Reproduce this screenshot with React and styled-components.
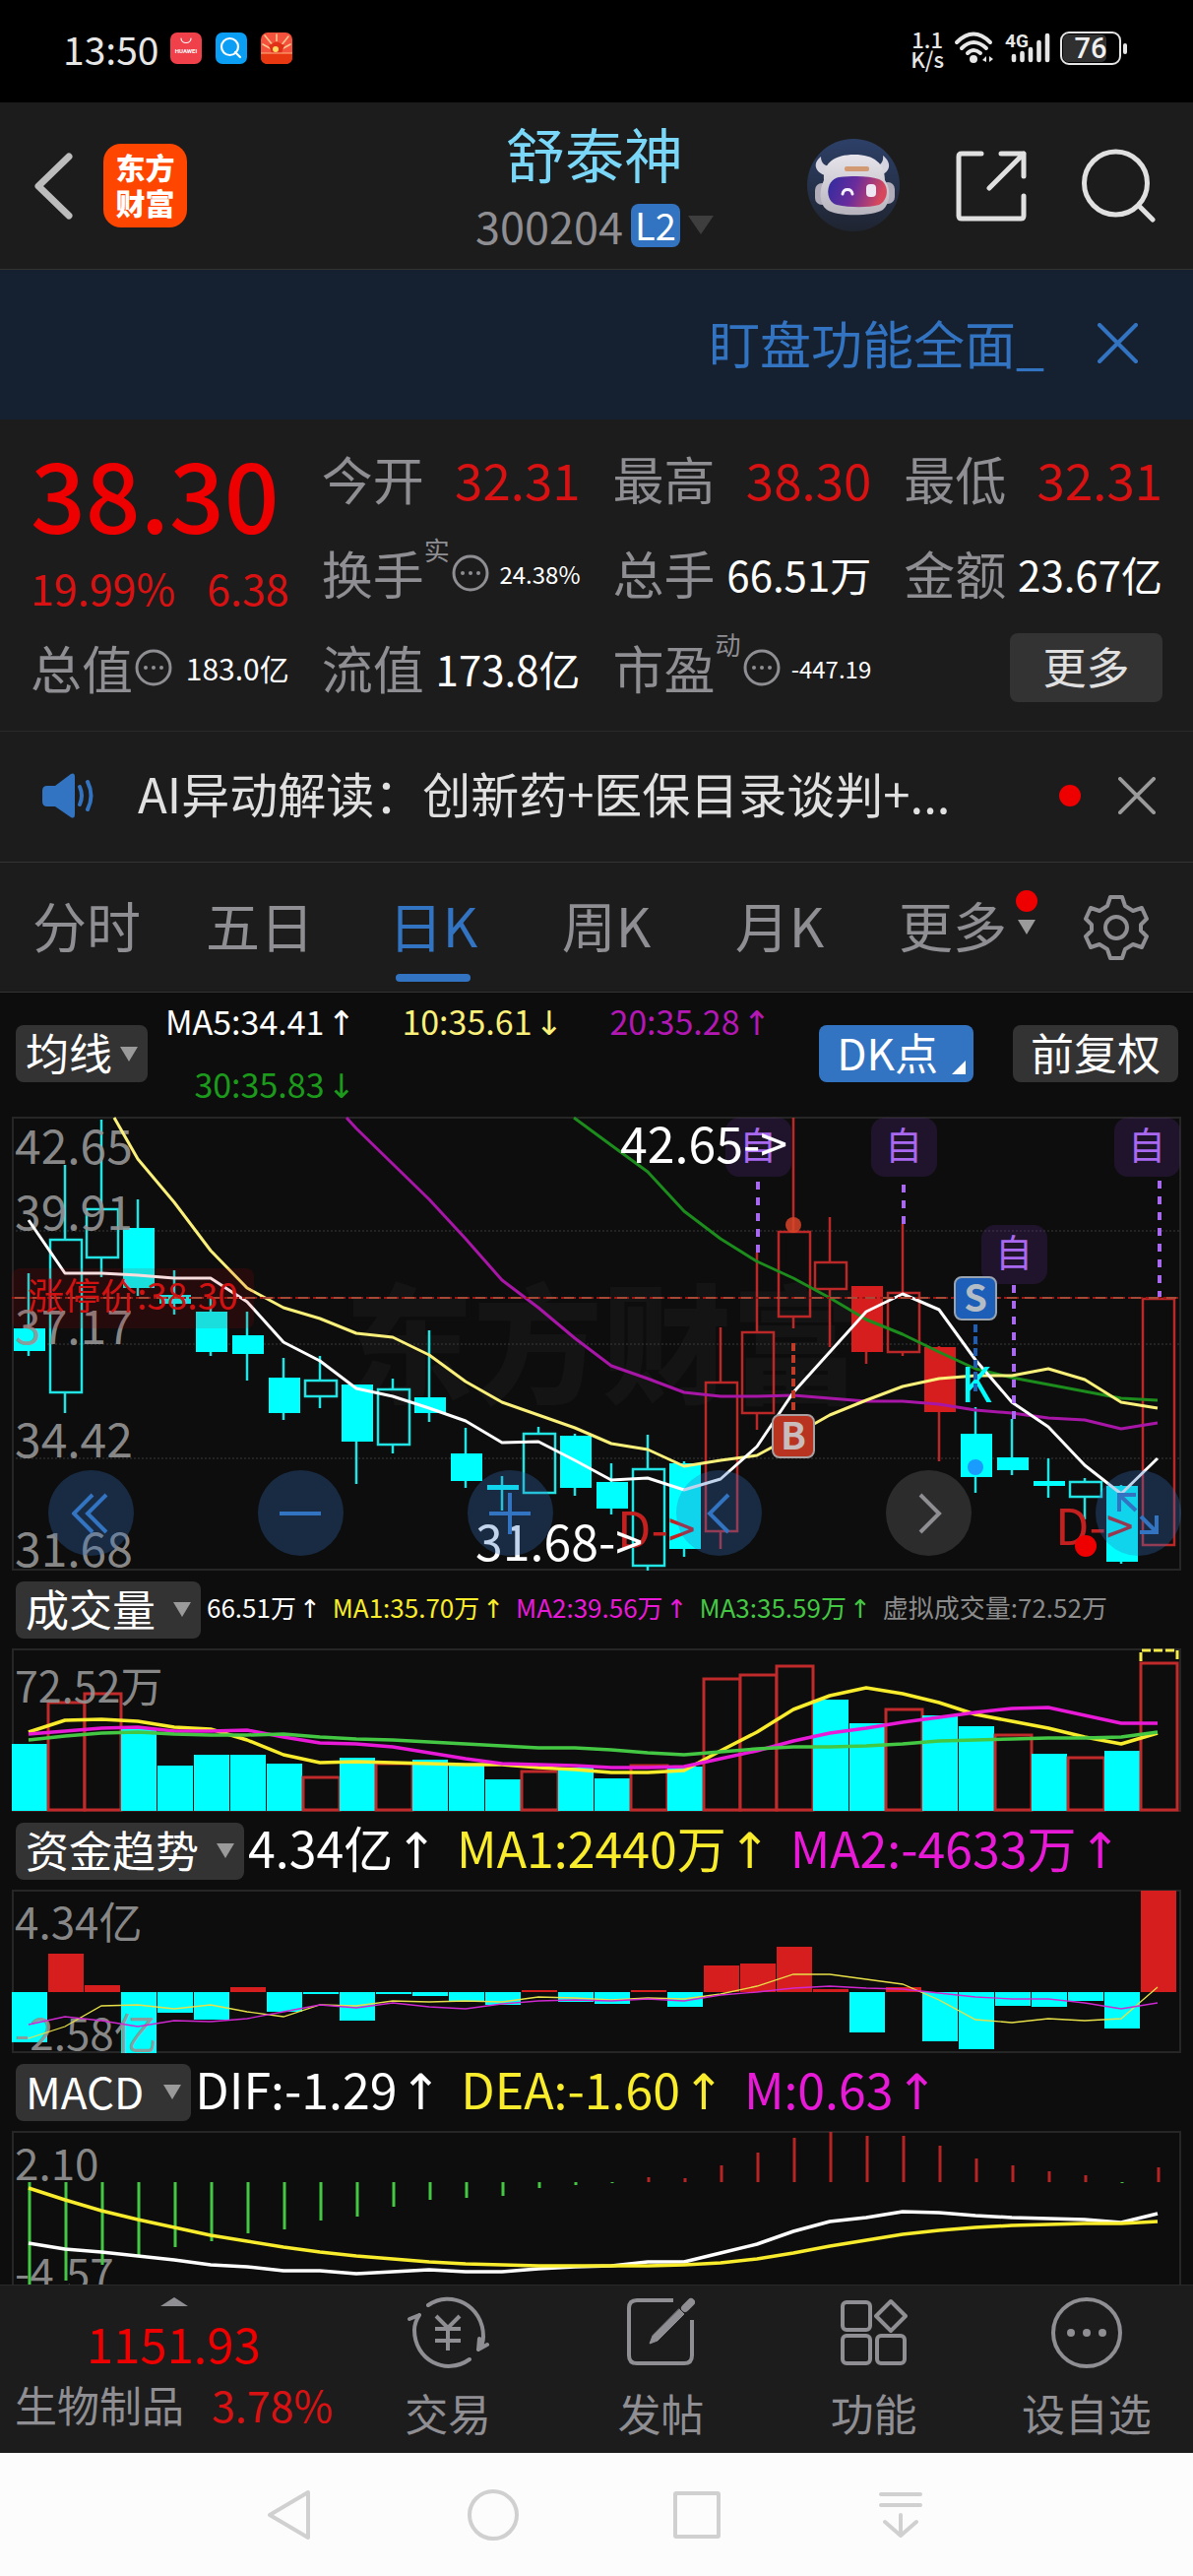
import React from "react";
import styled, { createGlobalStyle, css } from "styled-components";

const c = {
  panel: "#1c1c1c",
  ink: "#0d0d0d",
  chip: "#333333",
  line: "#333333",
  blue: "#3274c2",
  gray: "#8e8e93",
  red: "#ee0000",
  softRed: "#d81212",
  cyan: "#00ffff",
  yellow: "#f8ec2c",
  magenta: "#e81ad8",
  green: "#44c844",
};

const Global = createGlobalStyle`
  * { box-sizing: border-box; }
  body { margin: 0; background: ${c.ink}; }
  body, button { font-family: "Noto Sans CJK SC", Roboto, sans-serif; }
  button { border: 0; padding: 0; background: none; color: inherit; font-size: inherit; cursor: pointer; }
  svg { display: block; flex: none; }
`;

const Page = styled.div`
  display: flex;
  flex-direction: column;
  color: #fff;
  overflow: hidden;
`;

/* ---------- status bar ---------- */
const StatusBar = styled.div`
  height: 104px;
  padding: 0 66px 6px 64px;
  display: flex;
  justify-content: space-between;
  align-items: center;
  background: #000;
  color: #e6e6e6;
`;
const StatusGroup = styled.div`
  display: flex;
  align-items: center;
  gap: ${(p) => p.$gap}px;
`;
const Clock = styled.span`
  font-size: 39px;
  line-height: 40px;
`;
const Speed = styled.span`
  font-size: 22px;
  line-height: 20px;
  text-align: center;
  font-weight: 500;
`;

/* ---------- header ---------- */
const Header = styled.header`
  height: 170px;
  padding: 0 38px 0 34px;
  display: grid;
  grid-template-columns: 1fr auto 1fr;
  align-items: center;
  background: ${c.panel};
  border-bottom: 1px solid ${c.line};
`;
const HeaderSide = styled.div`
  display: flex;
  align-items: center;
  gap: ${(p) => p.$gap}px;
  justify-content: ${(p) => (p.$end ? "flex-end" : "flex-start")};
`;
const Logo = styled.a`
  width: 85px;
  height: 85px;
  padding-bottom: 4px;
  border-radius: 18px;
  background: #ff4600;
  color: #fff;
  font-size: 30px;
  line-height: 36px;
  font-weight: 900;
  text-align: center;
  text-decoration: none;
  display: grid;
  place-content: center;
`;
const Title = styled.h1`
  margin: 0;
  font-size: 60px;
  line-height: 80px;
  font-weight: 400;
  color: #7bd7f7;
  text-align: center;
`;
const Code = styled.div`
  display: flex;
  align-items: center;
  justify-content: center;
  gap: 8px;
  font-size: 45px;
  line-height: 68px;
  color: ${c.gray};
`;
const Level = styled.span`
  width: 50px;
  height: 44px;
  border-radius: 8px;
  background: ${c.blue};
  color: #fff;
  font-size: 38px;
  line-height: 42px;
  text-align: center;
`;
const Caret = styled.i`
  flex: none;
  border: ${(p) => p.$size || 9}px solid transparent;
  border-top: ${(p) => (p.$size || 9) + 6}px solid ${(p) => p.$color || "#9a9a9a"};
  border-bottom: 0;
`;

/* ---------- banner ---------- */
const Banner = styled.div`
  height: 152px;
  padding: 0 56px 4px;
  display: flex;
  align-items: center;
  justify-content: flex-end;
  gap: 54px;
  background: #152130;
  color: ${c.blue};
  font-size: 52px;
  line-height: 76px;
`;

/* ---------- quote ---------- */
const Quote = styled.section`
  padding: 12px 31px 16px;
  display: grid;
  grid-template-columns: repeat(4, 1fr);
  grid-auto-rows: 96px;
  column-gap: 33px;
  background: ${c.panel};
  border-bottom: 1px solid #2a2a2a;
`;
const PriceBlock = styled.div`
  grid-row: span 2;
  display: flex;
  flex-direction: column;
  color: ${c.red};
`;
const Price = styled.strong`
  font-size: 98px;
  line-height: 122px;
  font-weight: 500;
`;
const Change = styled.div`
  display: flex;
  justify-content: space-between;
  font-size: 43px;
  line-height: 72px;
  color: ${c.softRed};
`;
const Stat = styled.div`
  display: flex;
  align-items: center;
  white-space: nowrap;
  svg { margin: 0 2px; }
`;
const StatLabel = styled.span`
  font-size: 52px;
  line-height: 76px;
  color: ${c.gray};
`;
const StatNote = styled.span`
  align-self: flex-start;
  font-size: 26px;
  line-height: 48px;
  color: ${c.gray};
`;
const StatValue = styled.span`
  margin-left: auto;
  font-size: ${(p) => p.$size}px;
  color: ${(p) => (p.$up ? c.softRed : "#fff")};
`;
const MoreButton = styled.button`
  align-self: center;
  justify-self: end;
  width: 155px;
  height: 70px;
  padding-bottom: 4px;
  border-radius: 8px;
  background: ${c.chip};
  color: #e0e0e0;
  font-size: 44px;
  line-height: 64px;
`;

/* ---------- notice ---------- */
const Notice = styled.section`
  height: 133px;
  padding: 0 38px 2px 42px;
  display: flex;
  align-items: center;
  background: ${c.panel};
  border-bottom: 1px solid ${c.line};
  font-size: 49px;
  line-height: 70px;
  color: #e0e0e0;
`;
const NoticeLink = styled.a`
  flex: 1;
  min-width: 0;
  margin-left: 42px;
  padding-bottom: 6px;
  white-space: nowrap;
  overflow: hidden;
  color: inherit;
  text-decoration: none;
`;
const Dot = styled.i`
  width: 22px;
  height: 22px;
  border-radius: 50%;
  background: ${c.red};
  margin-right: 38px;
`;

/* ---------- tabs ---------- */
const Tabs = styled.nav`
  height: 132px;
  display: flex;
  background: ${c.panel};
  border-bottom: 1px solid ${c.line};
`;
const Tab = styled.button`
  flex: 1;
  position: relative;
  display: flex;
  align-items: center;
  justify-content: center;
  padding-bottom: 8px;
  font-size: 55px;
  line-height: 78px;
  white-space: nowrap;
  color: ${c.gray};
  ${(p) =>
    p.$active &&
    css`
      color: ${c.blue};
      &::after {
        content: "";
        position: absolute;
        left: calc(50% - 38px);
        bottom: 10px;
        width: 76px;
        height: 8px;
        border-radius: 4px;
        background: ${c.blue};
      }
    `}
`;
const TabMark = styled.span`
  position: absolute;
  right: 2px;
  top: 28px;
  display: flex;
  flex-direction: column;
  align-items: center;
  gap: 8px;
  i { margin: 0; }
`;
const GearButton = styled.button`
  flex: 0 0 156px;
  display: grid;
  place-items: center;
`;

/* ---------- indicators ---------- */
const MaRow = styled.div`
  height: 126px;
  padding: 0 15px 2px 16px;
  display: flex;
  align-items: center;
`;
const MaGrid = styled.div`
  flex: 0 0 633px;
  display: grid;
  grid-template-columns: repeat(3, 1fr);
  line-height: 61px;
  font-size: 34px;
  text-align: right;
`;
const Tint = styled.span`
  color: ${(p) => p.$color};
  white-space: nowrap;
`;
const ArrowGlyph = styled.span`
  font-family: "DejaVu Sans", sans-serif;
  margin-left: 3px;
`;
const Chip = styled.button`
  height: 58px;
  padding: 0 10px;
  border-radius: 8px;
  background: ${c.chip};
  color: #fff;
  font-size: 44px;
  line-height: 54px;
  display: flex;
  align-items: center;
  gap: ${(p) => p.$gap || 0}px;
  white-space: nowrap;
  span { margin-bottom: 4px; }
`;
const WideChip = styled(Chip)`
  padding: 0 18px;
  margin-left: ${(p) => (p.$push ? "auto" : "40px")};
  background: ${(p) => (p.$blue ? c.blue : c.chip)};
`;
const Corner = styled.i`
  align-self: flex-end;
  margin: 0 -10px 8px 14px;
  border-left: 14px solid transparent;
  border-bottom: 14px solid #fff;
`;
const IndicatorRow = styled.div`
  height: 79px;
  padding: 0 16px;
  display: flex;
  align-items: center;
  gap: ${(p) => (p.$dense ? 6 : 4)}px;
`;
const Readings = styled.div`
  display: flex;
  gap: ${(p) => (p.$dense ? 12 : 20)}px;
  padding-bottom: 4px;
  font-size: ${(p) => (p.$dense ? 26 : 50)}px;
  line-height: 70px;
`;
const ChartBox = styled.div`
  position: relative;
  margin: 0 12px;
  svg.plot { width: 100%; height: auto; }
`;
const Controls = styled.div`
  position: absolute;
  left: 37px;
  right: 0;
  bottom: 15px;
  display: flex;
  justify-content: space-between;
`;
const Round = styled.button`
  width: 87px;
  height: 87px;
  border-radius: 50%;
  display: grid;
  place-items: center;
  background: ${(p) => (p.$muted ? "#2c2c2c" : "rgba(50, 112, 192, 0.3)")};
`;

/* ---------- bottom ---------- */
const BottomBar = styled.footer`
  height: 171px;
  display: flex;
  background: ${c.panel};
  border-top: 1px solid #2a2a2a;
`;
const IndexBlock = styled.a`
  flex: 0 0 347px;
  padding: 12px 0 0 6px;
  display: flex;
  flex-direction: column;
  align-items: center;
  color: ${c.gray};
  text-decoration: none;
`;
const IndexValue = styled.span`
  margin-top: 2px;
  font-size: 49px;
  line-height: 70px;
  color: ${c.red};
`;
const IndexRow = styled.span`
  display: flex;
  gap: 28px;
  font-size: 43px;
  line-height: 54px;
  white-space: nowrap;
`;
const Action = styled.button`
  flex: 1;
  display: flex;
  flex-direction: column;
  align-items: center;
  padding-top: 10px;
  color: ${c.gray};
  font-size: 44px;
  line-height: 64px;
  svg { margin-bottom: 11px; }
`;
const SystemNav = styled.nav`
  height: 126px;
  padding-right: 4px;
  display: flex;
  justify-content: center;
  background: #fcfcfc;
`;
const NavButton = styled.button`
  width: 207px;
  display: grid;
  place-items: center;
`;

/* ---------- chart data ---------- */
const STEP = 37;
const cx = (i) => 17 + STEP * i;

const line = (values, y, head) =>
  (head ? `${head[0]},${y(head[1])} ` : "") +
  values
    .map((v, i) => (v == null ? null : `${cx(i)},${y(v)}`))
    .filter(Boolean)
    .join(" ");
const gap = (n) => Array(n).fill(null);

/* high, body top, body bottom, low, colour (c/r), filled */
const CANDLES = [
  [517, 685, 752, 767, "c", 1], [187, 412, 882, 942, "c", 0], [48, 317, 470, 528, "c", 0], [292, 377, 560, 585, "c", 1],
  [508, 582, 610, 641, "c", 1], [592, 633, 755, 769, "c", 1], [633, 706, 763, 843, "c", 1], [775, 834, 943, 962, "c", 1],
  [767, 840, 895, 926, "c", 0], [855, 855, 1028, 1158, "c", 1], [837, 866, 1040, 1064, "c", 0], [690, 894, 942, 969, "c", 1],
  [988, 1066, 1148, 1170, "c", 1], [1135, 1161, 1176, 1240, "c", 1], [985, 1003, 1188, 1188, "c", 0], [1006, 1012, 1170, 1195, "c", 1],
  [1096, 1152, 1234, 1251, "c", 1], [1008, 1110, 1411, 1424, "c", 0], [1088, 1094, 1356, 1381, "c", 1], [682, 847, 1305, 1356, "r", 0],
  [454, 694, 944, 993, "r", 0], [42, 388, 652, 684, "r", 0], [345, 480, 566, 741, "r", 0], [556, 556, 755, 791, "r", 1],
  [365, 573, 758, 767, "r", 0], [738, 741, 939, 1089, "r", 1], [924, 1006, 1137, 1186, "c", 1], [960, 1077, 1116, 1132, "c", 1],
  [1081, 1150, 1163, 1200, "c", 1], [1141, 1148, 1199, 1266, "c", 0], [1160, 1164, 1394, 1401, "c", 1], [590, 590, 1348, 1348, "r", 0],
];
const MA5 = [355, 515, 517, 523, 531, 531, 602, 727, 783, 866, 890, 927, 966, 1033, 1028, 1085, 1146, 1140, 1175, 1143, 1045, 880, 755, 633, 579, 628, 780, 908, 983, 1100, 1187, 1080];
const MA10 = [...gap(3), 168, 300, 448, 560, 622, 654, 698, 710, 764, 847, 908, 947, 987, 1036, 1052, 1104, 1087, 1070, 1010, 947, 903, 860, 838, 828, 829, 808, 839, 908, 928];
const MA20 = [...gap(9), 75, 182, 290, 410, 538, 622, 715, 797, 837, 879, 892, 890, 889, 897, 905, 905, 914, 933, 942, 956, 963, 989, 971];
const MA30 = [...gap(16), 125, 206, 327, 412, 480, 530, 590, 658, 703, 757, 808, 835, 855, 875, 896, 902];

const VOLUME = "c541 r410 r383 c495 c606 c573 c573 c600 r640 c582 r597 c588 c602 c648 r622 c612 c645 r602 c610 r339 r327 r299 c404 c478 r432 c453 c486 r511 c570 r579 c561 r292".split(" ");
const VOL1 = [505, 468, 466, 471, 489, 494, 527, 572, 598, 595, 598, 600, 602, 602, 611, 617, 626, 627, 620, 560, 505, 436, 393, 369, 387, 413, 449, 471, 492, 518, 541, 508];
const VOL2 = [511, 500, 491, 488, 500, 500, 499, 518, 536, 541, 548, 566, 586, 601, 602, 606, 613, 613, 610, 585, 560, 530, 508, 492, 474, 459, 444, 433, 430, 453, 478, 478];
const VOL3 = [527, 515, 506, 503, 510, 513, 512, 511, 520, 524, 529, 535, 540, 545, 552, 553, 557, 567, 573, 565, 555, 548, 549, 547, 539, 532, 528, 525, 521, 521, 519, 505];

const FUNDS = "c519 r249 r345 c552 c430 c450 r352 c425 c372 c453 c372 c378 c396 c405 r361 c396 c402 r361 c411 r286 r279 r229 r358 c489 r352 c516 c540 c408 c411 c393 c477 r56".split(" ");
const FUND1 = [507, 470, 408, 406, 418, 405, 426, 441, 405, 409, 394, 397, 393, 397, 380, 385, 389, 385, 386, 372, 347, 313, 313, 327, 341, 390, 451, 460, 446, 453, 446, 350];
const FUND2 = [464, 442, 452, 470, 452, 457, 448, 425, 405, 414, 399, 411, 416, 401, 394, 391, 394, 388, 392, 376, 366, 353, 348, 355, 357, 370, 381, 387, 387, 399, 418, 400];

const MACD = [1257, 1244, 1197, 1170, 1143, 1125, 1101, 1088, 1062, 1050, 1020, 999, 993, 987, 963, 953, 948, 930, 933, 894, 855, 810, 792, 804, 804, 834, 873, 894, 912, 924, 948, 900];
const DIF = [1131, 1149, 1159, 1170, 1183, 1197, 1203, 1215, 1215, 1224, 1218, 1211, 1218, 1218, 1210, 1203, 1201, 1189, 1189, 1162, 1133, 1095, 1065, 1052, 1034, 1037, 1046, 1053, 1055, 1058, 1068, 1041];
const DEA = [963, 1000, 1033, 1060, 1084, 1107, 1126, 1143, 1158, 1170, 1179, 1188, 1194, 1197, 1200, 1200, 1200, 1200, 1196, 1190, 1178, 1162, 1141, 1123, 1105, 1091, 1082, 1077, 1073, 1071, 1070, 1065];

const ink = { c: "#22e4e4", r: "#bc2828" };
const solid = { c: c.cyan, r: "#d61e1e" };
const axis = { fill: "#949494", fillOpacity: 0.92 };

const Frame = ({ h }) => (
  <path d={`M1 ${h} V1 H1187 V${h}`} fill="none" stroke="#262626" strokeWidth="2" />
);

function SelfBadge({ x, top, from, to, lineX }) {
  return (
    <g>
      <rect x={x - 33} y={top} width="67" height="60" rx="14" fill="#5a2d8c" fillOpacity="0.25" />
      <text x={x} y={top + 42} fontSize="38" textAnchor="middle" fill="#a868f0">自</text>
      <path d={`M${lineX || x} ${from} V${to}`} stroke="#a868f0" strokeWidth="4" strokeDasharray="8 8" />
    </g>
  );
}

function PriceChart() {
  const y = (v) => Math.round(v / 3 - 13);
  return (
    <svg className="plot" viewBox="0 0 1188 461" role="img" aria-label="日K">
      <text x="338" y="281" fontSize="131" fontWeight="900" fill="#141414">东方财富</text>
      {[388, 733, 1079].map((v) => (
        <path key={v} d={`M0 ${y(v)} H1188`} stroke="#3a3a3a" strokeDasharray="2 2" />
      ))}
      <path d="M1 1 H1187 V460 H1 Z" fill="none" stroke="#262626" strokeWidth="2" />
      {CANDLES.map(([hi, top, bot, lo, k, full], i) => (
        <g key={i} stroke={ink[k]} strokeWidth="2.5">
          <path d={`M${cx(i)} ${y(hi)} V${y(top)} M${cx(i)} ${y(bot)} V${y(lo)}`} />
          {full ? (
            <rect x={cx(i) - 15} y={y(top)} width="32" height={y(bot) - y(top)} fill={solid[k]} stroke="none" />
          ) : (
            <rect x={cx(i) - 15} y={y(top) + 1} width="32" height={y(bot) - y(top) - 2} fill="none" />
          )}
        </g>
      ))}
      <g {...axis} fontSize="48">
        <text x="3" y="48">42.65</text>
        <text x="3" y="115">39.91</text>
        <text x="3" y="231">37.17</text>
        <text x="3" y="346">34.42</text>
        <text x="3" y="457">31.68</text>
      </g>
      <g fill="none" strokeWidth="3" strokeLinejoin="round">
        <polyline points={line(MA30, y, [571, 42])} stroke="#1c8c1c" />
        <polyline points={line(MA20, y, [340, 42])} stroke="#a816a8" />
        <polyline points={line(MA10, y, [104, 42])} stroke="#fbf07a" />
        <polyline points={line(MA5, y)} stroke="#ffffff" />
      </g>
      <rect x="0" y={y(500)} width="246" height="61" rx="8" fill="#c80000" fillOpacity="0.13" />
      <path d={`M0 ${y(591)} H1188`} stroke="#a01414" strokeWidth="2" strokeDasharray="15 3" />
      <path d={`M0 ${y(591)} H1188`} stroke="#a88058" strokeWidth="1" strokeDasharray="10 8" strokeDashoffset="-3" />
      <text x="16" y="196" fontSize="37" fill="#d01212">涨停价:38.30</text>

      <SelfBadge x={758} top={1} from={66} to={138} />
      <SelfBadge x={906} top={1} from={69} to={109} />
      <SelfBadge x={1153} lineX={1166} top={1} from={65} to={183} />
      <SelfBadge x={1018} top={110} from={171} to={307} />

      <circle cx="794" cy={y(370)} r="8" fill="#d84428" fillOpacity="0.85" />
      <path d="M794 230 V298" stroke="#c03c28" strokeWidth="4" strokeDasharray="8 4" />
      <rect x="773" y="303" width="42" height="43" rx="7" fill="#b93420" stroke="#a8a0a0" strokeWidth="2" />
      <text x="794" y="338" fontSize="38" fontWeight="700" fill="#c8bcbc" textAnchor="middle">B</text>

      <text x="964" y={y(908)} fontSize="49" fill={c.cyan}>K</text>
      <path d="M979 211 V279" stroke="#1d5fb8" strokeWidth="4" strokeDasharray="8 4" />
      <rect x="958" y="163" width="42" height="43" rx="7" fill="#1d5fb8" stroke="#9aa4b0" strokeWidth="2" />
      <text x="979" y="198" fontSize="38" fontWeight="700" fill="#b4bcc6" textAnchor="middle">S</text>
      <circle cx="979" cy={y(1106)} r="8" fill="#1a9cff" />

      <g fontSize="50" fill="#c42020">
        <text x="615" y="438">D-&gt;</text>
        <text x="1060" y="435">D-&gt;</text>
      </g>
      <circle cx="1091" cy={y(1347)} r="11" fill={c.red} />
      <g fontSize="50" fill="#ffffff">
        <text x="618" y="47">42.65-&gt;</text>
        <text x="471" y="451">31.68-&gt;</text>
      </g>
    </svg>
  );
}

function VolumeChart() {
  const y = (v) => Math.round(v / 3 - 83);
  return (
    <svg className="plot" viewBox="0 0 1188 166" role="img" aria-label="成交量">
      <Frame h={166} />
      <path d="M0 165 H1188" stroke="#3a1c1c" strokeWidth="2" />
      {VOLUME.map((b, i) => {
        const top = y(+b.slice(1));
        return b[0] === "c" ? (
          <rect key={i} x={i * STEP} y={top} width="36" height={165 - top} fill={c.cyan} />
        ) : (
          <rect key={i} x={i * STEP} y={top + 1} width="37" height={163 - top} fill={c.ink} stroke="#c02a2a" strokeWidth="3" />
        );
      })}
      <path d="M1147 13 V2 H1184 V13" fill="none" stroke="#f8ec4c" strokeWidth="3" strokeDasharray="9 3" />
      <text x="3" y="55" fontSize="43" {...axis}>72.52万</text>
      <g fill="none" strokeWidth="3.5" strokeLinejoin="round">
        <polyline points={line(VOL1, y)} stroke={c.yellow} />
        <polyline points={line(VOL2, y)} stroke={c.magenta} />
        <polyline points={line(VOL3, y)} stroke={c.green} />
      </g>
    </svg>
  );
}

function FundChart() {
  const y = (v) => Math.round(v / 3 - 18);
  const zero = y(366);
  return (
    <svg className="plot" viewBox="0 0 1188 166" role="img" aria-label="资金趋势">
      <Frame h={166} />
      <path d="M0 165 H1188" stroke="#262626" strokeWidth="2" />
      {FUNDS.map((b, i) => {
        const v = y(+b.slice(1));
        return (
          <rect key={i} x={i * STEP} y={Math.min(v, zero)} width="36" height={Math.max(1, Math.abs(v - zero))} fill={solid[b[0]]} />
        );
      })}
      <g fontSize="44" {...axis}>
        <text x="3" y="50">4.34亿</text>
        <text x="3" y="163">-2.58亿</text>
      </g>
      <g fill="none" strokeWidth="1.3">
        <polyline points={line(FUND1, y)} stroke="#e8e048" />
        <polyline points={line(FUND2, y)} stroke="#d028d0" />
      </g>
    </svg>
  );
}

function MacdChart() {
  const y = (v) => Math.round(v / 3 - 263);
  return (
    <svg className="plot" viewBox="0 0 1188 156" role="img" aria-label="MACD">
      <Frame h={156} />
      <g fontSize="44" {...axis}>
        <text x="3" y="50">2.10</text>
        <text x="3" y="161">-4.57</text>
      </g>
      {MACD.map((v, i) => (
        <path key={i} d={`M${cx(i) + 1} ${y(945)} V${y(v)}`} strokeWidth="3" stroke={v > 945 ? c.green : "#b82424"} />
      ))}
      <g fill="none" strokeWidth="3.5" strokeLinejoin="round">
        <polyline points={line(DIF, y)} stroke="#fff" />
        <polyline points={line(DEA, y)} stroke={c.yellow} />
      </g>
    </svg>
  );
}

/* ---------- icons ---------- */
const stroke = (color, width) => ({
  fill: "none",
  stroke: color,
  strokeWidth: width,
  strokeLinecap: "round",
  strokeLinejoin: "round",
});

const Cross = ({ size, color }) => (
  <svg width={size} height={size} viewBox="0 0 40 40" {...stroke(color, 4)}>
    <path d="M2 2 L38 38 M38 2 L2 38" />
  </svg>
);

const Robot = () => (
  <svg width="95" height="95" viewBox="0 0 95 95">
    <defs>
      <linearGradient id="sky" x1="0" y1="0" x2="0" y2="1">
        <stop offset="0" stopColor="#2d4068" />
        <stop offset="1" stopColor="#1f2430" />
      </linearGradient>
      <linearGradient id="visor" x1="0" y1="0" x2="1" y2="0.2">
        <stop offset="0" stopColor="#2e2ca0" />
        <stop offset="0.5" stopColor="#6a2c9c" />
        <stop offset="1" stopColor="#d8485c" />
      </linearGradient>
      <linearGradient id="shell" x1="0" y1="0" x2="0" y2="1">
        <stop offset="0" stopColor="#e6e4ea" />
        <stop offset="1" stopColor="#b8b4be" />
      </linearGradient>
    </defs>
    <circle cx="47" cy="47" r="47" fill="url(#sky)" />
    <path d="M14 18 C6 24 7 33 18 37 L26 28 C18 28 14 25 14 18 Z M77 17 C86 24 85 33 75 37 L66 28 C74 28 78 24 77 17 Z" fill="#d6d4de" />
    <rect x="8" y="45" width="14" height="22" rx="7" fill="#b0acba" />
    <rect x="75" y="44" width="14" height="22" rx="7" fill="#b0acba" />
    <path d="M17 42 C16 24 28 16 48 16 C68 16 79 25 79 42 C86 52 84 66 77 72 C66 79 30 79 20 72 C12 66 12 52 17 42 Z" fill="url(#shell)" />
    <rect x="38" y="28" width="25" height="5" rx="2" fill="#d08a58" opacity="0.8" />
    <path d="M32 39 C50 37 64 38 73 41 C84 46 83 62 73 67 C62 70 44 70 30 67 C18 64 18 42 32 39 Z" fill="url(#visor)" />
    <path d="M36 56 C37 50 45 50 46 56" {...stroke("#f4f0ff", 3)} />
    <rect x="60" y="46" width="10" height="13" rx="4" fill="#efe6f4" />
  </svg>
);

const Gear = () => (
  <svg width="66" height="68" viewBox="0 0 66 68" {...stroke(c.gray, 4)}>
    <path d="M27 3 H39 L42 12 L50 17 L59 14 L64 25 L58 31 V37 L64 43 L59 54 L50 51 L42 56 L39 65 H27 L24 56 L16 51 L7 54 L2 43 L8 37 V31 L2 25 L7 14 L16 17 L24 12 Z" />
    <circle cx="33" cy="34" r="11" />
  </svg>
);

const MoreDots = ({ size = 38, w = 3 }) => (
  <svg width={size} height={size} viewBox="0 0 38 38">
    <circle cx="19" cy="19" r="17" fill="none" stroke="#8e8e93" strokeWidth={w} />
    {[11, 19, 27].map((x) => (
      <circle key={x} cx={x} cy="19" r="2" fill="#8e8e93" />
    ))}
  </svg>
);

const Up = () => <ArrowGlyph>↑</ArrowGlyph>;
const Down = () => <ArrowGlyph>↓</ArrowGlyph>;

const STATS = [
  { label: "今开", value: "32.31", size: 51, up: true },
  { label: "最高", value: "38.30", size: 51, up: true },
  { label: "最低", value: "32.31", size: 51, up: true },
  { label: "换手", note: "实", info: true, value: "24.38%", size: 24 },
  { label: "总手", value: "66.51万", size: 42 },
  { label: "金额", value: "23.67亿", size: 42 },
  { label: "总值", info: true, value: "183.0亿", size: 30 },
  { label: "流值", value: "173.8亿", size: 42 },
  { label: "市盈", note: "动", info: true, value: "-447.19", size: 24 },
];

export default function App() {
  return (
    <Page>
      <Global />
      <StatusBar>
        <StatusGroup $gap={12}>
          <Clock>13:50</Clock>
          <svg width="124" height="32" viewBox="0 0 124 32">
            <rect width="32" height="32" rx="7" fill="#f0404a" />
            <path d="M11 6 C11 12 21 12 21 6" {...stroke("#fff", 1.2)} />
            <text x="16" y="21" fontSize="6" fontWeight="700" textAnchor="middle" fill="#fff" fontFamily="Roboto">HUAWEI</text>
            <rect x="46" width="32" height="32" rx="7" fill="#0a9ff5" />
            <circle cx="60.500" cy="14.500" r="8.500" {...stroke("#fff", 2.2)} />
            <path d="M66 20 L71 25" {...stroke("#fff", 2.2)} />
            <rect x="92" width="32" height="32" rx="7" fill="#f4523c" />
            <path d="M96 3 L105 14 M120 4 L112 14 M108 2 V12 M94 12 L103 17 M122 12 L113 17" {...stroke("#ffc890", 1.6)} />
            <path d="M100 13 L108 9 L116 13 L113 21 H103 Z" fill="#e03018" />
            <circle cx="107" cy="17" r="3" fill="#ffd860" />
            <path d="M92 21 H124 V25 Q124 32 117 32 H99 Q92 32 92 25 Z" fill="#e83812" />
            <path d="M92 21 H124" stroke="#ffb080" />
          </svg>
        </StatusGroup>
        <StatusGroup $gap={10}>
          <Speed>1.1<br />K/s</Speed>
          <svg width="42" height="34" viewBox="0 0 42 34" {...stroke("#e6e6e6", 4)}>
            <path d="M3 11 Q20 -6 37 11 M8 17 Q20 5 33 17 M14 22 Q20 16 27 22" />
            <circle cx="20" cy="28" r="2" fill="#e6e6e6" />
            <path d="M29 29 L33 25 V31 Z M36 25 V31 L40 28 Z" fill="#e6e6e6" stroke="none" />
          </svg>
          <svg width="46" height="34" viewBox="0 0 46 34">
            <text x="0" y="16" fontSize="19" fontWeight="700" fill="#e6e6e6" fontFamily="Roboto">4G</text>
            <path d="M9 25 V29 M17.500 22 V29 M26 18 V29 M34.500 11 V29 M43 4 V29" {...stroke("#e6e6e6", 4.6)} />
          </svg>
          <svg width="69" height="34" viewBox="0 0 69 34">
            <rect x="1" y="1" width="60" height="32" rx="8" fill="none" stroke="#e6e6e6" strokeWidth="2" />
            <rect x="3" y="3" width="44" height="28" rx="5" fill="#303030" />
            <rect x="64" y="12" width="4" height="11" rx="2" fill="#e6e6e6" />
            <text x="31" y="27" fontSize="29" fontWeight="500" textAnchor="middle" fill="#f0f0f0" fontFamily="Roboto">76</text>
          </svg>
        </StatusGroup>
      </StatusBar>

      <Header>
        <HeaderSide $gap={31}>
          <button aria-label="返回">
            <svg width="40" height="68" viewBox="0 0 40 68" {...stroke("#bcbcbc", 7)}>
              <path d="M36 4 L5 34 L36 64" />
            </svg>
          </button>
          <Logo href="#home">东方<br />财富</Logo>
        </HeaderSide>
        <div>
          <Title>舒泰神</Title>
          <Code>
            300204
            <Level>L2</Level>
            <Caret $size={13} $color="#3e3e3e" />
          </Code>
        </div>
        <HeaderSide $end $gap={55}>
          <button aria-label="助手"><Robot /></button>
          <button aria-label="分享">
            <svg width="74" height="74" viewBox="0 0 74 74" {...stroke("#e0e0e0", 5)}>
              <path d="M27 4 H7 Q4 4 4 7 V67 Q4 70 7 70 H67 Q70 70 70 67 V47 M47 4 H70 V27 M70 4 L35 39" />
            </svg>
          </button>
          <button aria-label="搜索">
            <svg width="75" height="75" viewBox="0 0 75 75" {...stroke("#e0e0e0", 5)}>
              <circle cx="34.500" cy="35" r="32" />
              <path d="M58 58 L72 72" />
            </svg>
          </button>
        </HeaderSide>
      </Header>

      <Banner>
        <span>盯盘功能全面_</span>
        <button aria-label="关闭"><Cross size={41} color={c.blue} /></button>
      </Banner>

      <Quote>
        <PriceBlock>
          <Price>38.30</Price>
          <Change><span>19.99%</span><span>6.38</span></Change>
        </PriceBlock>
        {STATS.map((s) => (
          <Stat key={s.label}>
            <StatLabel>{s.label}</StatLabel>
            {s.note && <StatNote>{s.note}</StatNote>}
            {s.info && <MoreDots />}
            <StatValue $size={s.size} $up={s.up}>{s.value}</StatValue>
          </Stat>
        ))}
        <MoreButton>更多</MoreButton>
      </Quote>

      <Notice>
        <svg width="56" height="46" viewBox="0 0 56 46">
          <path d="M6 13 H14 L30 1 Q34 -1 34 4 V42 Q34 47 30 45 L14 34 H6 Q1 34 1 29 V18 Q1 13 6 13 Z" fill={c.blue} />
          <path d="M39 14 Q43 23 39 32 M47 9 Q54 23 47 37" {...stroke(c.blue, 4)} />
        </svg>
        <NoticeLink href="#news">AI异动解读：创新药+医保目录谈判+...</NoticeLink>
        <Dot />
        <button aria-label="关闭提示"><Cross size={38} color="#9a9a9a" /></button>
      </Notice>

      <Tabs>
        <Tab>分时</Tab>
        <Tab>五日</Tab>
        <Tab $active>日K</Tab>
        <Tab>周K</Tab>
        <Tab>月K</Tab>
        <Tab>
          更多
          <TabMark><Dot /><Caret /></TabMark>
        </Tab>
        <GearButton aria-label="设置"><Gear /></GearButton>
      </Tabs>

      <MaRow>
        <Chip $gap={8}><span>均线</span><Caret /></Chip>
        <MaGrid>
          <Tint $color="#fff">MA5:34.41<Up /></Tint>
          <Tint $color="#fbf07a">10:35.61<Down /></Tint>
          <Tint $color="#b418b4">20:35.28<Up /></Tint>
          <Tint $color="#1c9a1c">30:35.83<Down /></Tint>
        </MaGrid>
        <WideChip $blue $push><span>DK点</span><Corner /></WideChip>
        <WideChip><span>前复权</span></WideChip>
      </MaRow>

      <ChartBox>
        <PriceChart />
        <Controls>
          <Round aria-label="最左">
            <svg width="40" height="42" viewBox="0 0 40 42" fill="none" stroke={c.blue} strokeWidth="4">
              <path d="M21 2 L2 21 L21 40 M35 2 L16 21 L35 40" />
            </svg>
          </Round>
          <Round aria-label="缩小">
            <svg width="42" height="42" viewBox="0 0 42 42" stroke={c.blue} strokeWidth="4"><path d="M0 21 H42" /></svg>
          </Round>
          <Round aria-label="放大">
            <svg width="42" height="42" viewBox="0 0 42 42" stroke={c.blue} strokeWidth="4"><path d="M0 21 H42 M21 0 V42" /></svg>
          </Round>
          <Round aria-label="左移">
            <svg width="26" height="42" viewBox="0 0 26 42" fill="none" stroke={c.blue} strokeWidth="4"><path d="M22 2 L3 21 L22 40" /></svg>
          </Round>
          <Round aria-label="右移" $muted>
            <svg width="26" height="42" viewBox="0 0 26 42" fill="none" stroke="#8e8e93" strokeWidth="4"><path d="M4 2 L23 21 L4 40" /></svg>
          </Round>
          <Round aria-label="全屏">
            <svg width="42" height="42" viewBox="0 0 42 42" fill="none" stroke={c.blue} strokeWidth="4">
              <path d="M2 19 V2 H19 M2 2 L19 18 M40 23 V40 H23 M40 40 L24 24" />
            </svg>
          </Round>
        </Controls>
      </ChartBox>

      <IndicatorRow $dense>
        <Chip $gap={18}><span>成交量</span><Caret /></Chip>
        <Readings $dense>
          <Tint $color="#fff">66.51万<Up /></Tint>
          <Tint $color={c.yellow}>MA1:35.70万<Up /></Tint>
          <Tint $color={c.magenta}>MA2:39.56万<Up /></Tint>
          <Tint $color={c.green}>MA3:35.59万<Up /></Tint>
          <Tint $color="#8b8b8b">虚拟成交量:72.52万</Tint>
        </Readings>
      </IndicatorRow>
      <ChartBox><VolumeChart /></ChartBox>

      <IndicatorRow>
        <Chip $gap={18}><span>资金趋势</span><Caret /></Chip>
        <Readings>
          <Tint $color="#fff">4.34亿<Up /></Tint>
          <Tint $color={c.yellow}>MA1:2440万<Up /></Tint>
          <Tint $color={c.magenta}>MA2:-4633万<Up /></Tint>
        </Readings>
      </IndicatorRow>
      <ChartBox><FundChart /></ChartBox>

      <IndicatorRow>
        <Chip $gap={20}><span>MACD</span><Caret /></Chip>
        <Readings>
          <Tint $color="#fff">DIF:-1.29<Up /></Tint>
          <Tint $color={c.yellow}>DEA:-1.60<Up /></Tint>
          <Tint $color={c.magenta}>M:0.63<Up /></Tint>
        </Readings>
      </IndicatorRow>
      <ChartBox><MacdChart /></ChartBox>

      <BottomBar>
        <IndexBlock href="#index">
          <svg width="28" height="9" viewBox="0 0 28 9"><path d="M14 0 L28 9 H0 Z" fill={c.gray} /></svg>
          <IndexValue>1151.93</IndexValue>
          <IndexRow>生物制品<Tint $color={c.softRed}>3.78%</Tint></IndexRow>
        </IndexBlock>
        <Action>
          <svg width="84" height="76" viewBox="0 0 84 76" {...stroke(c.gray, 4)}>
            <path d="M22 10 C45 -6 78 10 78 42 Q78 50 73 55 M73 55 L74 44 M73 55 L82 50 M64 65 C40 82 8 66 8 35 Q8 28 13 20 M13 20 L3 24" />
            <path d="M30 21 L42 33 L54 21 M29 34 H55 M29 46 H55 M42 33 V56" strokeLinecap="butt" />
          </svg>
          交易
        </Action>
        <Action>
          <svg width="70" height="76" viewBox="0 0 70 76" {...stroke(c.gray, 4)}>
            <path d="M48 5 H11 Q3 5 3 13 V61 Q3 69 11 69 H59 Q67 69 67 61 V25" strokeLinecap="butt" />
            <path d="M60 13 L66 7" strokeWidth="8" />
            <path d="M54 14 L59 19 L32 46 L24 49 L27 41 Z" fill={c.gray} strokeWidth="1" />
          </svg>
          发帖
        </Action>
        <Action>
          <svg width="68" height="76" viewBox="0 0 68 76" {...stroke(c.gray, 4)}>
            <rect x="2" y="7" width="28" height="28" rx="4" />
            <rect x="2" y="41" width="28" height="28" rx="4" />
            <rect x="37" y="41" width="28" height="28" rx="4" />
            <path d="M51 6 L66 21 L51 36 L36 21 Z" />
          </svg>
          功能
        </Action>
        <Action>
          <MoreDots size={76} w={2} />
          设自选
        </Action>
      </BottomBar>

      <SystemNav>
        <NavButton aria-label="后退">
          <svg width="46" height="52" viewBox="0 0 46 52" {...stroke("#d0d0d0", 4)}><path d="M42 3 V49 L3 26 Z" /></svg>
        </NavButton>
        <NavButton aria-label="主页">
          <svg width="52" height="52" viewBox="0 0 52 52" {...stroke("#d0d0d0", 4)}><circle cx="26" cy="26" r="24" /></svg>
        </NavButton>
        <NavButton aria-label="任务">
          <svg width="48" height="48" viewBox="0 0 48 48" {...stroke("#d0d0d0", 4)}><rect x="2" y="2" width="44" height="44" rx="1" /></svg>
        </NavButton>
        <NavButton aria-label="下拉">
          <svg width="44" height="48" viewBox="0 0 44 48" {...stroke("#d0d0d0", 4)}>
            <path d="M2 3 H42 M2 14 H42 M22 24 V45 M6 31 L22 45 L38 31" />
          </svg>
        </NavButton>
      </SystemNav>
    </Page>
  );
}
